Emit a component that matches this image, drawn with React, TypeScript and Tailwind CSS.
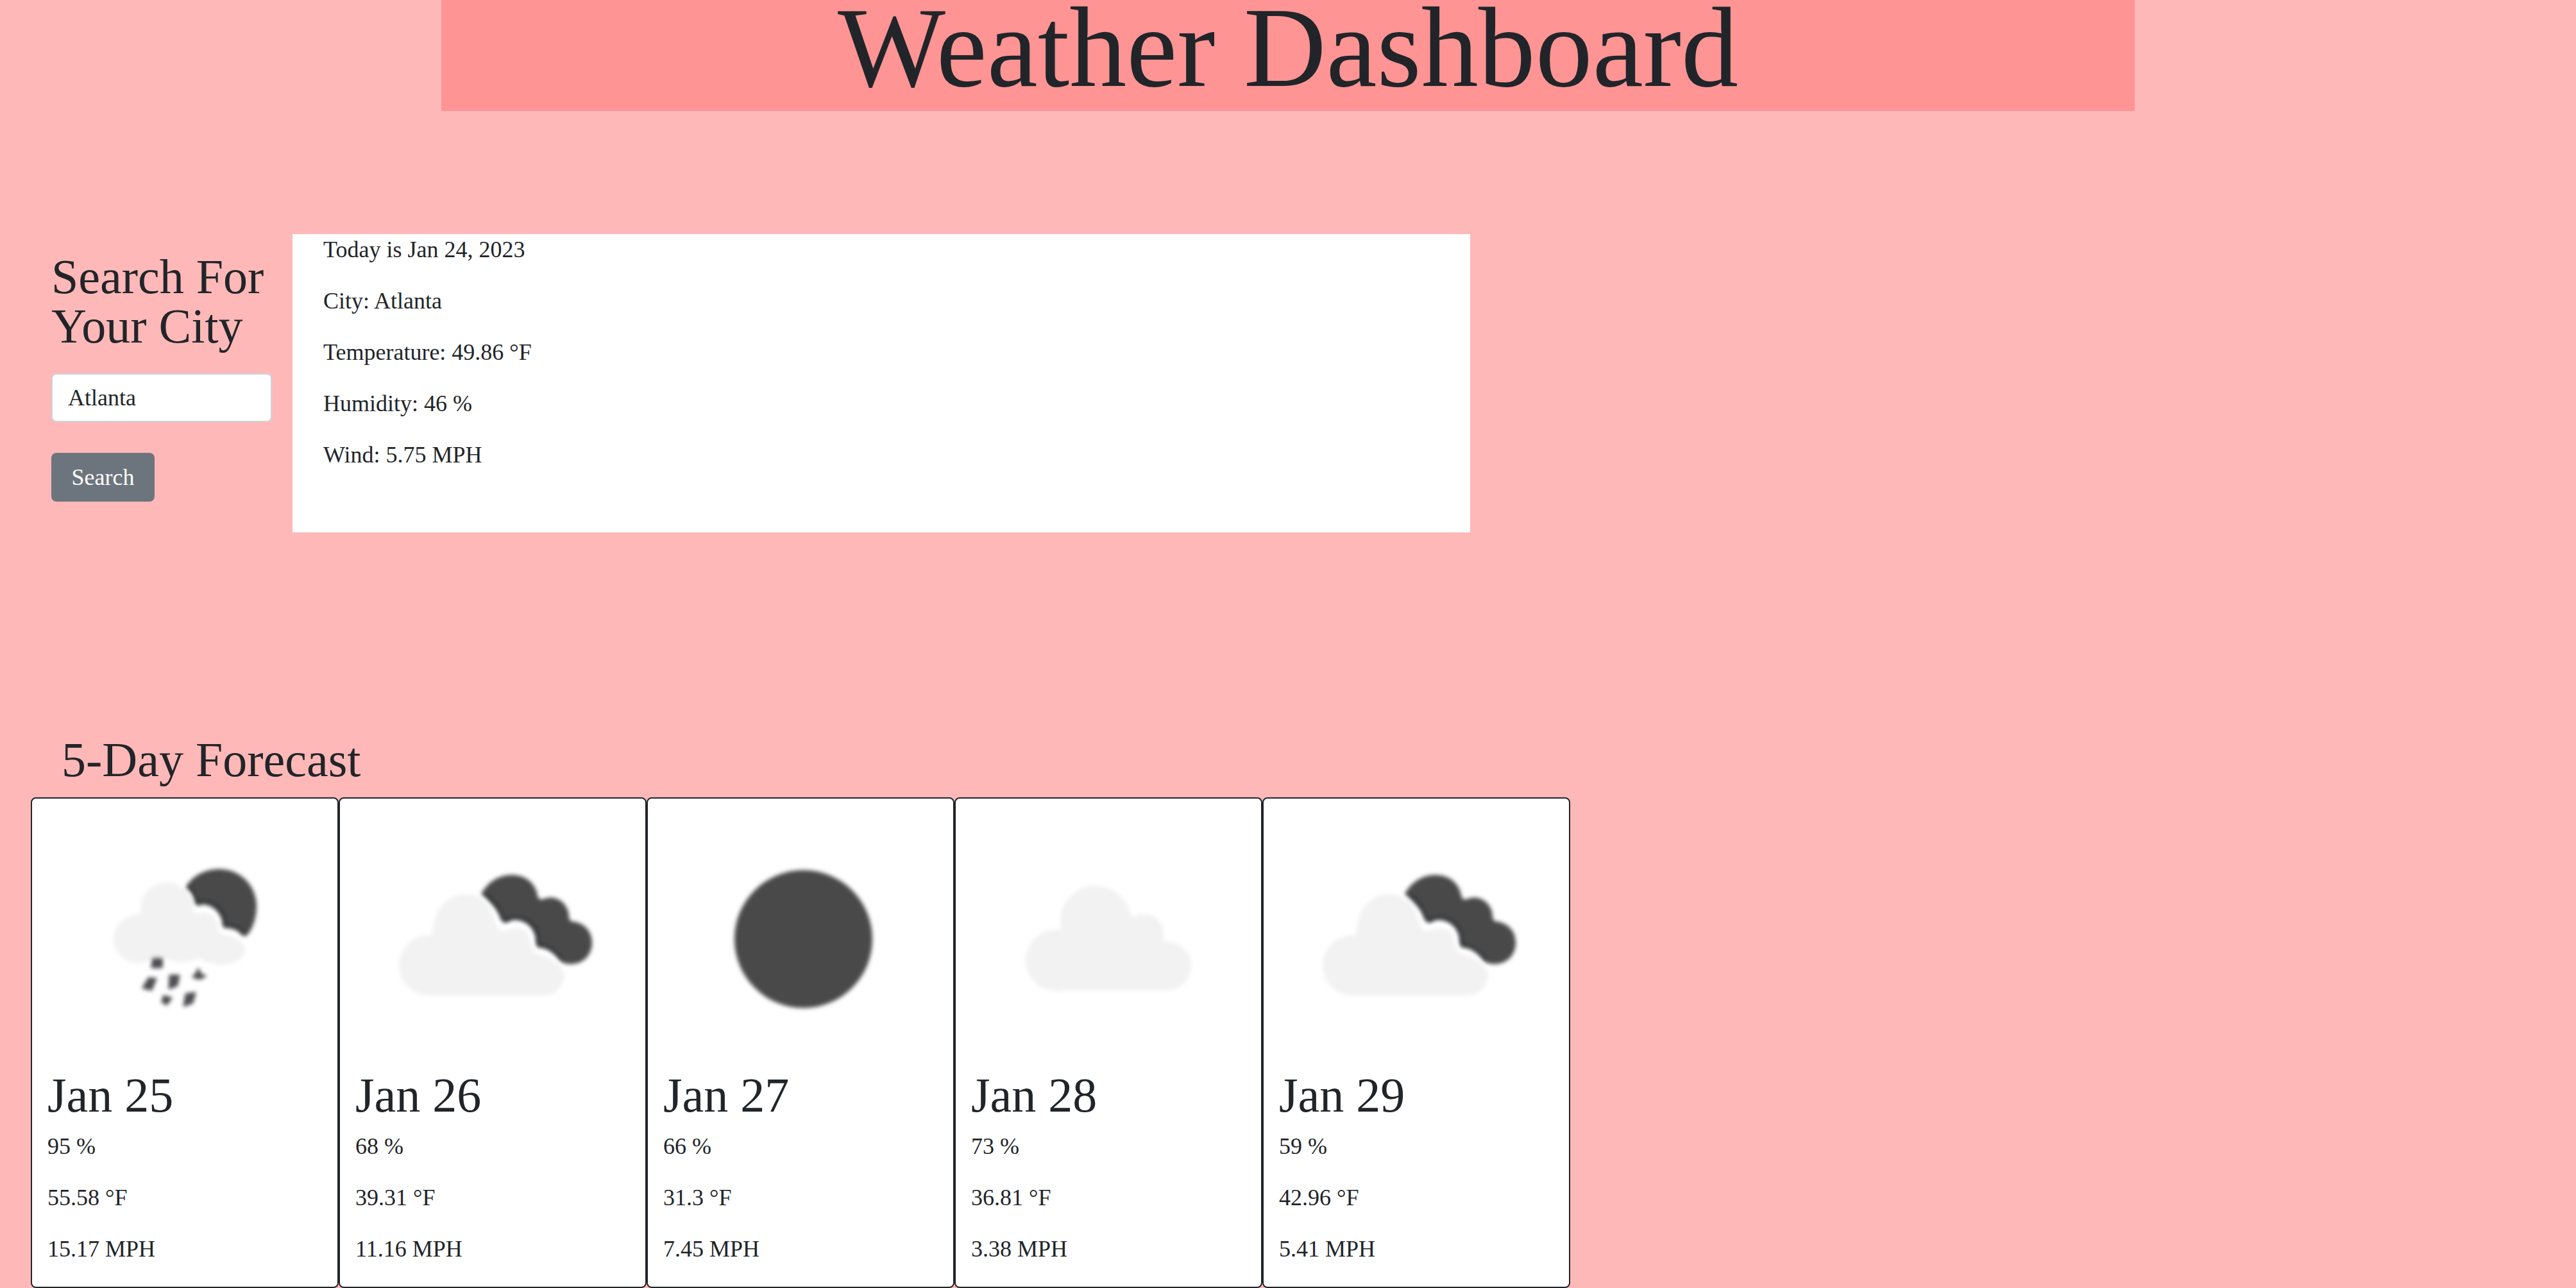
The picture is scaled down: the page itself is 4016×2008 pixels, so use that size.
import { useState, type FormEvent, type ReactNode } from "react";

type IconName = "rain" | "brokenClouds" | "clear" | "cloud";

type Day = {
  date: string;
  icon: IconName;
  humidity: string;
  temperature: string;
  wind: string;
};

const days: Day[] = [
  { date: "Jan 25", icon: "rain", humidity: "95 %", temperature: "55.58 °F", wind: "15.17 MPH" },
  { date: "Jan 26", icon: "brokenClouds", humidity: "68 %", temperature: "39.31 °F", wind: "11.16 MPH" },
  { date: "Jan 27", icon: "clear", humidity: "66 %", temperature: "31.3 °F", wind: "7.45 MPH" },
  { date: "Jan 28", icon: "cloud", humidity: "73 %", temperature: "36.81 °F", wind: "3.38 MPH" },
  { date: "Jan 29", icon: "brokenClouds", humidity: "59 %", temperature: "42.96 °F", wind: "5.41 MPH" },
];

const today = [
  "Today is Jan 24, 2023",
  "City: Atlanta",
  "Temperature: 49.86 °F",
  "Humidity: 46 %",
  "Wind: 5.75 MPH",
];

const DARK = "#48484a";
const EDGE = "#34373a";
const LIGHT = "#f2f2f2";

const drawings: Record<IconName, ReactNode> = {
  clear: <circle cx="218.5" cy="219" r="107.5" fill={DARK} />,
  cloud: (
    <g fill={LIGHT}>
      <circle cx="133" cy="252" r="48" />
      <circle cx="194" cy="191" r="55" />
      <circle cx="270" cy="210" r="30" />
      <circle cx="305" cy="261" r="38" />
      <path d="M133 205 H155 L200 180 L245 180 L250 184 L285 200 L299 222 L305 240 V299 H133 Z" />
    </g>
  ),
  brokenClouds: (
    <>
      <g fill={LIGHT}>
        <circle cx="115" cy="260" r="47" />
        <path d="M115 213 H120 C121 175 142 149 171 149 C192 149 207 162 214 181 C217 192 222 204 229 207 C242 201 258 201 268 208 C273 220 273 232 280 241 C300 246 318 254 326 273 C326 293 312 307 293 307 H115 Z" />
      </g>
      <path
        fill={DARK}
        d="M196 149 C206 130 224 119 243 119 C264 119 278 130 283 146 C284 154 287 159 292 157 C312 148 332 163 333 183 C333 190 336 192 342 192 C360 196 369 209 369 225 C369 244 355 258 336 258 C328 258 321 256 317 251 C309 240 299 233 285 232 C280 230 282 222 280 213 C275 197 262 189 247 189 C241 190 235 196 231 193 C226 190 225 182 221 176 C215 166 205 157 196 149 Z"
      />
      <path
        fill="none"
        stroke={EDGE}
        strokeWidth="6"
        strokeLinecap="round"
        d="M206 151 C214 158 221 166 226 177 C229 184 231 190 236 189 C253 181 275 189 282 206 C286 216 282 228 289 229 C303 231 312 239 321 250"
      />
    </>
  ),
  rain: (
    <>
      <g fill={LIGHT}>
        <circle cx="141" cy="219" r="38" />
        <circle cx="186" cy="172" r="41" />
        <ellipse cx="209" cy="228" rx="42" ry="27" />
        <ellipse cx="270" cy="236" rx="38" ry="23" />
        <path d="M141 181 L186 160 L220 164 C226 175 228 180 236 179 C250 176 262 182 264 194 C265 207 270 212 280 214 L296 222 V248 H147 Z" />
      </g>
      <path
        fill={DARK}
        d="M215 139 C226 120 245 110 268 110 C301 110 326 136 326 168 C326 184 321 200 313 211 C309 216 304 215 301 211 C295 204 287 202 278 202 C270 201 274 195 271 187 C265 173 255 166 243 165 C237 167 231 169 229 162 C228 153 224 146 215 139 Z"
      />
      <path
        fill="none"
        stroke={EDGE}
        strokeWidth="5"
        strokeLinecap="round"
        d="M223 140 C230 147 229 158 235 160 C252 158 268 166 274 180 C279 190 275 198 283 198 C293 198 299 202 305 208"
      />
      <g fill="#505052" stroke="#505052" strokeWidth="3" strokeLinejoin="round">
        <path d="M164 249 H179 L178 263 H163 Z" />
        <path d="M158 280 L169 281 L162 298 L149 295 Z" />
        <path d="M191 276 H205 L202 291 L190 296 Z" />
        <path d="M235 266 L239 274 L246 277 L237 281 L227 278 L232 273 Z" />
        <path d="M181 308 L193 311 L186 321 L179 317 Z" />
        <path d="M216 305 L230 303 L226 318 L213 323 Z" />
      </g>
    </>
  ),
};

function WeatherIcon({ name }: { name: IconName }) {
  const filterId = `soft-${name}`;
  return (
    <svg viewBox="0 0 428 422" className="block w-full" aria-hidden="true">
      <defs>
        <filter id={filterId}>
          <feGaussianBlur stdDeviation="3" />
        </filter>
      </defs>
      <g filter={`url(#${filterId})`}>{drawings[name]}</g>
    </svg>
  );
}

function ForecastCard({ day }: { day: Day }) {
  return (
    <article className="rounded-lg border-2 border-[#212529] bg-white px-6 pb-[35px]">
      <WeatherIcon name={day.icon} />
      <h2 className="mb-4 text-[76px] leading-[80px]">{day.date}</h2>
      <div className="flex flex-col gap-8">
        <p>{day.humidity}</p>
        <p>{day.temperature}</p>
        <p>{day.wind}</p>
      </div>
    </article>
  );
}

export default function App() {
  const [city, setCity] = useState("Atlanta");
  const submit = (event: FormEvent) => event.preventDefault();

  return (
    <div className="min-h-screen bg-[#ffb8b8] font-['Liberation_Serif',serif] text-[36px] leading-[48px] text-[#212529]">
      <header className="mx-auto max-w-[2640px] bg-[#ff9494] pb-[25px] text-center">
        <h1 className="text-[178px] leading-[148px]">Weather Dashboard</h1>
      </header>

      <main className="px-12">
        <section className="mt-48 flex max-w-[2448px] items-start">
          <form onSubmit={submit} className="w-2/12 px-8 pt-7">
            <h2 className="text-[76px] leading-[77px]">
              <label htmlFor="city">Search For Your City</label>
            </h2>
            <input
              id="city"
              type="text"
              value={city}
              onChange={(event) => setCity(event.target.value)}
              className="mt-[35px] block w-full rounded-lg border-2 border-[#ced4da] bg-white px-6 py-3"
            />
            <button type="submit" className="mt-12 block min-w-[161px] rounded-lg bg-[#6c757d] px-6 py-[14px] text-white">
              Search
            </button>
          </form>
          <div className="flex w-9/12 flex-col gap-8 bg-white px-12 pb-[97px]">
            {today.map((line) => (
              <p key={line}>{line}</p>
            ))}
          </div>
        </section>

        <section className="mt-[314px] max-w-[2400px]">
          <h2 className="mb-[19px] px-12 text-[76px] leading-[80px]">5-Day Forecast</h2>
          <div className="grid grid-cols-5">
            {days.map((day) => (
              <ForecastCard key={day.date} day={day} />
            ))}
          </div>
        </section>
      </main>
    </div>
  );
}
